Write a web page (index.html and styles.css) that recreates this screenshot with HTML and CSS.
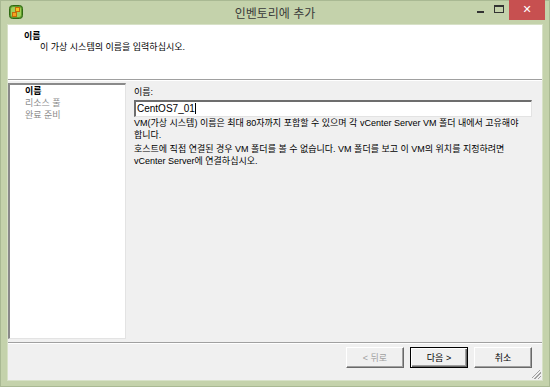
FILE: index.html
```html
<!DOCTYPE html>
<html lang="ko">
<head>
<meta charset="utf-8">
<link rel="stylesheet" href="styles.css">
</head>
<body>
<div class="window">
  <div class="titlebar">
    <div class="tb-left">
      <svg class="appicon" width="14" height="14" viewBox="0 0 14 14">
        <rect x="0.5" y="0.5" width="13" height="13" rx="3" fill="#5f9a2e" stroke="#2f6a12"/>
        <rect x="2" y="2" width="10" height="10" rx="2" fill="#9fd05a"/>
        <rect x="6.5" y="2.5" width="4" height="4" fill="#f7c21f" stroke="#c46a0a" stroke-width="1"/>
        <rect x="3.5" y="7.5" width="4" height="4" fill="#f7a21f" stroke="#c46a0a" stroke-width="1"/>
      </svg>
    </div>
    <div class="title">인벤토리에 추가</div>
    <div class="controls">
      <span class="ctl-min"></span>
      <span class="ctl-max"></span>
      <span class="ctl-close">✕</span>
    </div>
  </div>
  <div class="frame">
    <div class="client">
      <div class="header">
        <div class="h-title">이름</div>
        <div class="h-sub">이 가상 시스템의 이름을 입력하십시오.</div>
      </div>
      <div class="main">
        <div class="nav">
          <div class="nav-item active">이름</div>
          <div class="nav-item">리소스 풀</div>
          <div class="nav-item">완료 준비</div>
        </div>
        <div class="content">
          <div class="label">이름:</div>
          <div class="input">CentOS7_01<span class="caret"></span></div>
          <p class="help">VM(가상 시스템) 이름은 최대 80자까지 포함할 수 있으며 각 vCenter Server VM 폴더 내에서 고유해야<br>합니다.</p>
          <p class="help">호스트에 직접 연결된 경우 VM 폴더를 볼 수 없습니다. VM 폴더를 보고 이 VM의 위치를 지정하려면<br>vCenter Server에 연결하십시오.</p>
        </div>
      </div>
      <div class="footer">
        <button class="btn" disabled>&lt; 뒤로</button>
        <button class="btn default">다음 &gt;</button>
        <button class="btn">취소</button>
        <span class="grip"></span>
      </div>
    </div>
  </div>
</div>
</body>
</html>
```
FILE: styles.css
```css
* { box-sizing: border-box; }
html, body { margin: 0; padding: 0; }
body {
  width: 550px;
  height: 387px;
  font-family: "Liberation Sans", "Noto Sans CJK KR", sans-serif;
  font-size: 9px;
  color: #000;
}
.window {
  width: 550px;
  height: 387px;
  background: #c4d2ab;
  border: 1px solid #a9b993;
  display: flex;
  flex-direction: column;
}
.titlebar {
  height: 23px;
  display: grid;
  grid-template-columns: 1fr auto 1fr;
  align-items: start;
}
.tb-left {
  padding: 4px 0 0 8px;
}
.appicon { display: block; }
.title {
  font-family: "Noto Sans CJK KR", sans-serif;
  font-size: 12px;
  line-height: 23px;
  color: #3a3a3a;
}
.controls {
  display: flex;
  justify-content: flex-end;
  align-items: flex-start;
  padding-right: 4px;
  margin-top: -1px;
}
.ctl-min {
  width: 7px;
  height: 2px;
  background: #333;
  margin: 11px 10px 0 0;
}
.ctl-max {
  width: 10px;
  height: 8px;
  border: 1px solid #333;
  border-top-width: 2px;
  margin: 5px 5px 0 0;
}
.ctl-close {
  width: 36px;
  height: 20px;
  background: #c75050;
  color: #fff;
  font-size: 11px;
  font-weight: bold;
  text-align: center;
  line-height: 20px;
  font-family: "DejaVu Sans", sans-serif;
}
.frame {
  flex: 1;
  padding: 0 6px 5px 6px;
  display: flex;
}
.client {
  flex: 1;
  background: #f0f0f0;
  border: 1px solid #d7e1c7;
  display: flex;
  flex-direction: column;
}
.header {
  height: 55px;
  background: #fff;
  border-bottom: 1px solid #a0a0a0;
  box-shadow: 0 1px 0 #fff;
  padding: 5px 0 0 16px;
}
.h-title {
  font-weight: bold;
  line-height: 12px;
}
.h-sub {
  padding-left: 16px;
  line-height: 11px;
}
.main {
  flex: 1;
  display: flex;
  padding: 3px 0 3px 0;
}
.nav {
  width: 118px;
  background: #fff;
  border-top: 2px solid #8a8a8a;
  border-left: 2px solid #8a8a8a;
  border-right: 1px solid #e3e3e3;
  border-bottom: 1px solid #e3e3e3;
  padding: 0 0 0 15px;
}
.nav-item {
  line-height: 12px;
  color: #8c8c8c;
}
.nav-item.active {
  color: #000;
  font-weight: bold;
}
.content {
  flex: 1;
  padding: 3px 10px 0 8px;
}
.label {
  line-height: 12px;
}
.input {
  margin-top: 2px;
  height: 17px;
  background: #fff;
  border-top: 2px solid #6d6d6d;
  border-left: 2px solid #6d6d6d;
  border-right: 1px solid #e3e3e3;
  border-bottom: 1px solid #e3e3e3;
  padding-left: 1px;
  font-size: 10px;
  line-height: 14px;
}
.caret {
  display: inline-block;
  width: 1px;
  height: 11px;
  background: #000;
  vertical-align: -2px;
}
.help {
  margin: 0;
  line-height: 12px;
}
.help + .help { margin-top: 2px; }
.footer {
  height: 38px;
  border-top: 1px solid #a0a0a0;
  box-shadow: inset 0 1px 0 #fff;
  display: flex;
  justify-content: flex-end;
  align-items: flex-start;
  gap: 6px;
  padding: 4px 10px 0 0;
  position: relative;
}
.btn {
  width: 58px;
  height: 21px;
  font-family: "Liberation Sans", "Noto Sans CJK KR", sans-serif;
  font-size: 9px;
  color: #000;
  background: #f0f0f0;
  border: 1px solid;
  border-color: #fff #696969 #696969 #fff;
  box-shadow: inset -1px -1px 0 #a0a0a0;
  padding: 0;
}
.btn:disabled { color: #a0a0a0; }
.btn.default {
  border: 1px solid #000;
  box-shadow: inset 1px 1px 0 #fff, inset -1px -1px 0 #696969, inset -2px -2px 0 #a0a0a0;
}
.grip {
  position: absolute;
  right: 1px;
  bottom: 1px;
  width: 9px;
  height: 9px;
  background: linear-gradient(135deg, transparent 40%, #a0a0a0 40%, #a0a0a0 48%, transparent 48%, transparent 60%, #a0a0a0 60%, #a0a0a0 68%, transparent 68%, transparent 80%, #a0a0a0 80%, #a0a0a0 88%, transparent 88%);
}
```
